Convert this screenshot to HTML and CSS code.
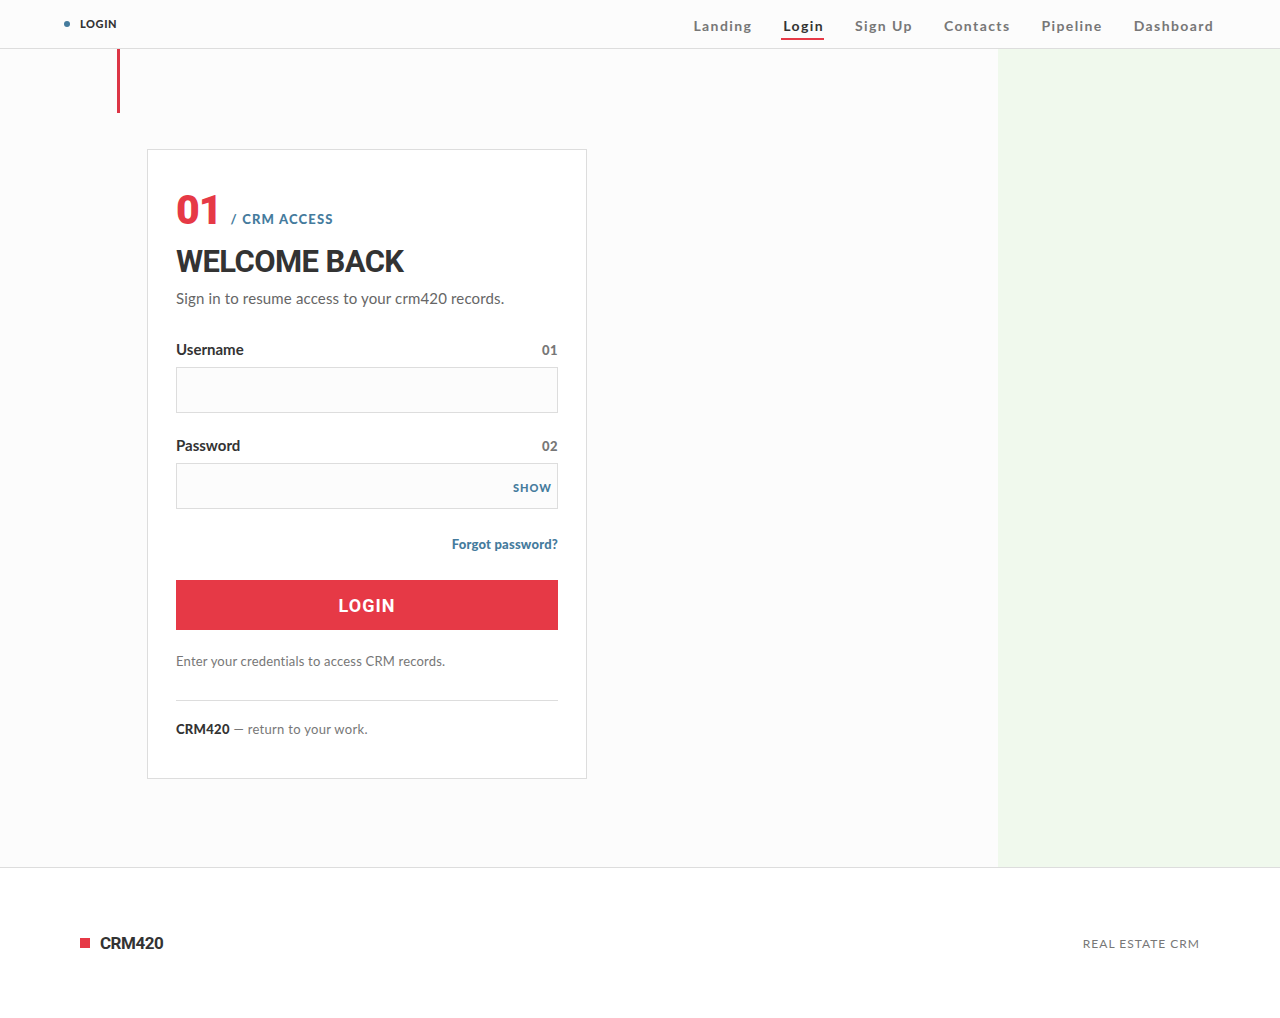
FILE: index.html
```html
<!DOCTYPE html>
<html lang="en">
<head>
    <meta charset="UTF-8">
    <meta name="viewport" content="width=device-width, initial-scale=1.0">
    <title>Login - CRM420</title>
    <link rel="stylesheet" href="styles.css">
</head>
<body>
    <header class="topbar">
        <div class="crumb">
            <span class="crumb-dot"></span>
            <span class="crumb-label">LOGIN</span>
        </div>
        <nav class="nav">
            <a class="nav-link" href="#">Landing</a>
            <a class="nav-link active" href="#">Login</a>
            <a class="nav-link" href="#">Sign Up</a>
            <a class="nav-link" href="#">Contacts</a>
            <a class="nav-link" href="#">Pipeline</a>
            <a class="nav-link" href="#">Dashboard</a>
        </nav>
    </header>

    <main class="layout">
        <section class="primary">
            <div class="accent-bar"></div>
            <div class="card">
                <div class="card-kicker">
                    <span class="step-num">01</span>
                    <span class="step-tag">/ CRM ACCESS</span>
                </div>
                <h1 class="card-title">WELCOME BACK</h1>
                <p class="card-sub">Sign in to resume access to your crm420 records.</p>

                <form class="form">
                    <div class="field">
                        <div class="field-head">
                            <label class="field-label" for="username">Username</label>
                            <span class="field-num">01</span>
                        </div>
                        <input class="field-input" id="username" type="text">
                    </div>
                    <div class="field">
                        <div class="field-head">
                            <label class="field-label" for="password">Password</label>
                            <span class="field-num">02</span>
                        </div>
                        <div class="input-wrap">
                            <input class="field-input" id="password" type="password">
                            <button class="show-btn" type="button">SHOW</button>
                        </div>
                    </div>
                    <div class="forgot-row">
                        <a class="forgot" href="#">Forgot password?</a>
                    </div>
                    <button class="login-btn" type="button">LOGIN</button>
                </form>

                <p class="hint">Enter your credentials to access CRM records.</p>
                <div class="card-foot">
                    <strong>CRM420</strong> — return to your work.
                </div>
            </div>
        </section>
        <aside class="side"></aside>
    </main>

    <footer class="footer">
        <div class="brand">
            <span class="brand-mark"></span>
            <span class="brand-name">CRM420</span>
        </div>
        <div class="footer-tag">REAL ESTATE CRM</div>
    </footer>
</body>
</html>
```

FILE: styles.css
```css
body {
    font-family: Lato, "Noto Sans", sans-serif;
    margin: 0;
    background-color: #fcfcfc;
    color: #333;
}
.topbar {
    height: 48px;
    display: flex;
    align-items: center;
    justify-content: space-between;
    padding: 0 66px 0 64px;
    border-bottom: 1px solid #ddd;
    background-color: #fcfcfc;
}
.crumb {
    display: flex;
    align-items: center;
    gap: 10px;
    margin-top: -1px;
}
.crumb-dot {
    width: 6px;
    height: 6px;
    border-radius: 50%;
    background-color: #457b9d;
}
.crumb-label {
    font-size: 11px;
    font-weight: 900;
    letter-spacing: 0.6px;
    color: #333;
}
.nav {
    display: flex;
    gap: 31px;
    height: 100%;
}
.nav-link {
    display: flex;
    align-items: center;
    position: relative;
    font-size: 14px;
    font-weight: 700;
    letter-spacing: 1.4px;
    color: #777;
    text-decoration: none;
    padding-top: 2px;
}
.nav-link.active {
    color: #333;
}
.nav-link.active::after {
    content: '';
    position: absolute;
    left: -2px;
    right: 0;
    bottom: 8px;
    height: 2px;
    background-color: #e63946;
}
.layout {
    display: grid;
    grid-template-columns: 1fr 282px;
    min-height: 818px;
    border-bottom: 1px solid #ddd;
}
.primary {
    padding: 0 0 88px 117px;
}
.accent-bar {
    width: 3px;
    height: 64px;
    background-color: #dc3545;
}
.side {
    background-color: #f0f9ed;
}
.card {
    width: 382px;
    margin: 36px 0 0 30px;
    padding: 36px 28px 41px;
    background-color: #fff;
    border: 1px solid #ddd;
}
.card-kicker {
    display: flex;
    align-items: baseline;
    gap: 9px;
}
.step-num {
    font-family: Roboto, sans-serif;
    font-size: 41px;
    font-weight: 900;
    color: #e63946;
    line-height: 48px;
    letter-spacing: -1px;
}
.step-tag {
    font-size: 13px;
    font-weight: 900;
    letter-spacing: 1.2px;
    color: #457b9d;
}
.card-title {
    margin: 8px 0 0;
    font-family: Roboto, sans-serif;
    font-size: 31px;
    line-height: 40px;
    font-weight: 700;
    letter-spacing: -0.6px;
    color: #333;
}
.card-sub {
    margin: 7px 0 0;
    font-size: 15px;
    letter-spacing: 0.15px;
    color: #666;
}
.form {
    margin-top: 33px;
}
.field {
    margin-bottom: 23px;
}
.field-head {
    display: flex;
    justify-content: space-between;
    align-items: baseline;
    margin-bottom: 9px;
}
.field-label {
    font-size: 15px;
    font-weight: 700;
    color: #333;
}
.field-num {
    font-size: 13px;
    font-weight: 900;
    color: #777;
    letter-spacing: 0.5px;
}
.input-wrap {
    position: relative;
}
.field-input {
    display: block;
    box-sizing: border-box;
    width: 100%;
    height: 46px;
    border: 1px solid #ddd;
    background-color: #fcfcfc;
    padding: 0 12px;
    font-family: inherit;
    font-size: 15px;
}
.show-btn {
    position: absolute;
    right: 6px;
    top: 50%;
    transform: translateY(-40%);
    border: 0;
    background: none;
    font-family: inherit;
    font-size: 11px;
    font-weight: 900;
    letter-spacing: 1px;
    color: #457b9d;
    padding: 0;
}
.forgot-row {
    display: flex;
    justify-content: flex-end;
    margin-top: 27px;
}
.forgot {
    font-size: 13px;
    font-weight: 900;
    color: #457b9d;
    text-decoration: none;
    letter-spacing: 0.2px;
}
.login-btn {
    display: block;
    width: 100%;
    height: 50px;
    margin-top: 28px;
    border: 0;
    background-color: #e63946;
    color: #fff;
    font-family: Roboto, sans-serif;
    font-size: 18px;
    font-weight: 700;
    letter-spacing: 1px;
}
.hint {
    margin: 23px 0 0;
    font-size: 13px;
    letter-spacing: 0.2px;
    color: #777;
}
.card-foot {
    margin-top: 31px;
    padding-top: 20px;
    border-top: 1px solid #ddd;
    font-size: 13px;
    color: #777;
    letter-spacing: 0.3px;
}
.card-foot strong {
    font-weight: 900;
    color: #333;
}
.footer {
    height: 150px;
    display: flex;
    align-items: center;
    justify-content: space-between;
    padding: 0 80px;
    background-color: #fff;
}
.brand {
    display: flex;
    align-items: center;
    gap: 10px;
}
.brand-mark {
    width: 10px;
    height: 10px;
    background-color: #e63946;
}
.brand-name {
    font-family: Roboto, sans-serif;
    font-size: 17px;
    font-weight: 700;
    color: #333;
    letter-spacing: -0.5px;
}
.footer-tag {
    font-size: 12px;
    letter-spacing: 1px;
    color: #777;
}
```
